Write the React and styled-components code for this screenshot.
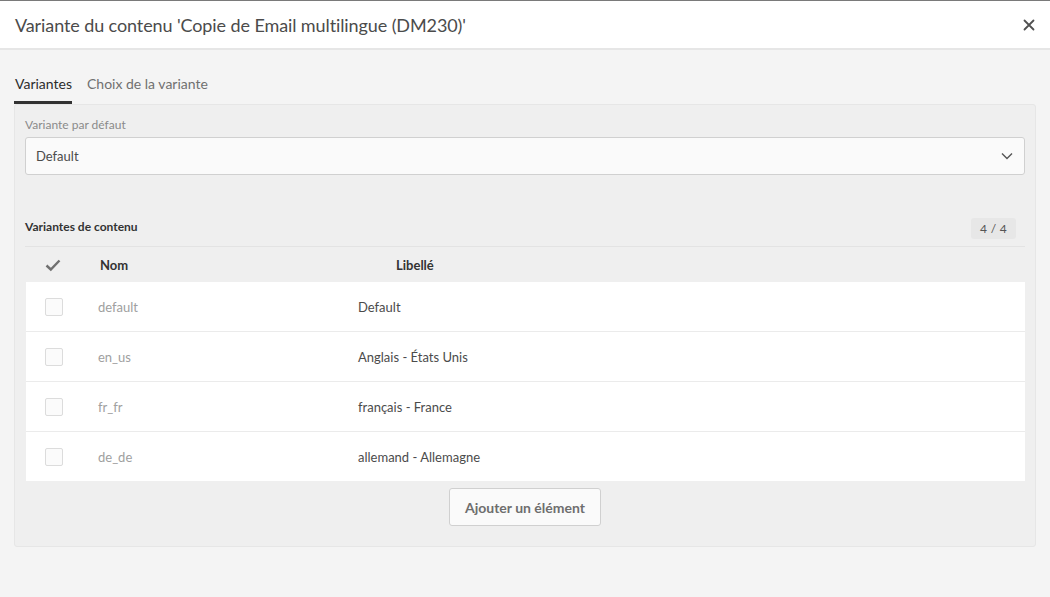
import React from 'react';
import styled, { createGlobalStyle } from 'styled-components';

const GlobalStyle = createGlobalStyle`
  html, body { margin: 0; padding: 0; }
  body {
    font-family: Lato, 'Open Sans', sans-serif;
    background: #f4f4f4;
    color: #4b4b4b;
  }
  * { box-sizing: border-box; }
`;

const Dialog = styled.div`
  width: 1050px; height: 597px;
  display: flex; flex-direction: column;
  background: #f4f4f4;
  border-top: 1px solid #7a7a7a;
`;
const Header = styled.div`
  height: 49px; flex-shrink: 0;
  background: #fff; border-bottom: 2px solid #e6e6e6;
  display: flex; align-items: center; justify-content: space-between;
  padding: 0 14px 0 15px;
`;
const Title = styled.h1`
  margin: 0; font-size: 18px; font-weight: 400; color: #4b4b4b;
  letter-spacing: -0.1px;
`;
const CloseButton = styled.button`
  border: none; background: none; padding: 0; cursor: pointer;
  width: 14px; height: 14px; display: flex;
`;
const Body = styled.div`
  padding: 22px 14px 0 14px;
  display: flex; flex-direction: column;
`;
const Tabs = styled.div`
  display: flex; gap: 15px; height: 32px; align-items: flex-start;
  padding-left: 1px;
`;
const Tab = styled.div`
  font-size: 14px; height: 32px; padding-top: 3px;
  color: ${p => (p.$active ? '#2c2c2c' : '#707070')};
  border-bottom: 3px solid ${p => (p.$active ? '#323232' : 'transparent')};
  margin-left: ${p => (p.$active ? '-1px' : '0')};
  padding-left: ${p => (p.$active ? '1px' : '0')};
`;
const Panel = styled.div`
  background: #efefef; border: 1px solid #e6e6e6; border-radius: 3px;
  width: 1022px; height: 443px;
  padding: 12px 10px 0 10px;
  display: flex; flex-direction: column;
`;
const FieldLabel = styled.div`
  font-size: 12px; color: #8a8a8a; height: 20px;
`;
const Select = styled.div`
  height: 38px; background: #fafafa; border: 1px solid #d0d0d0; border-radius: 3px;
  display: flex; align-items: center; justify-content: space-between;
  padding: 0 10px 0 10px; font-size: 13px; color: #4b4b4b;
`;
const SectionHead = styled.div`
  margin-top: 43px; height: 29px;
  display: flex; justify-content: space-between; align-items: flex-start;
  border-bottom: 1px solid #e3e3e3;
`;
const SectionTitle = styled.div`
  font-size: 12px; font-weight: 700; color: #333; padding-top: 1px;
`;
const Counter = styled.div`
  background: #e7e7e7; border-radius: 3px; font-size: 12px; color: #555;
  height: 21px; padding: 0 9px; display: flex; align-items: center;
  margin-right: 9px; letter-spacing: 0.3px;
`;
const Grid = styled.div`
  display: grid; grid-template-columns: 72px 260px 1fr;
  align-items: center;
`;
const HeadRow = styled(Grid)`
  height: 35px; font-size: 13px; font-weight: 700; color: #333;
`;
const HeadCell = styled.div`
  padding-left: ${p => p.$indent || 0}px;
`;
const CheckCell = styled.div`
  display: flex;
  padding-left: ${p => (p.$head ? '20px' : '19px')};
`;
const Rows = styled.div`
  background: #fff; margin-left: 1px;
`;
const Row = styled(Grid)`
  height: ${p => (p.$first ? '49px' : '50px')}; font-size: 13px;
  border-top: ${p => (p.$first ? 'none' : '1px solid #ebebeb')};
`;
const NameCell = styled.div`
  color: #a0a0a0;
`;
const LabelCell = styled.div`
  color: #4b4b4b;
`;
const Checkbox = styled.span`
  width: 18px; height: 18px; border: 1px solid #dcdcdc; border-radius: 2px;
  background: #fbfbfb; display: block;
`;
const Footer = styled.div`
  display: flex; justify-content: center; padding-top: 7px;
`;
const AddButton = styled.button`
  height: 38px; padding: 0 15px; background: #fafafa;
  border: 1px solid #d0d0d0; border-radius: 3px;
  font-family: inherit; font-size: 14px; font-weight: 700; color: #6e6e6e;
  cursor: pointer;
`;

const variants = [
  { name: 'default', label: 'Default' },
  { name: 'en_us', label: 'Anglais - États Unis' },
  { name: 'fr_fr', label: 'français - France' },
  { name: 'de_de', label: 'allemand - Allemagne' },
];

const App = () => (
  <>
    <GlobalStyle />
    <Dialog>
      <Header>
        <Title>Variante du contenu 'Copie de Email multilingue (DM230)'</Title>
        <CloseButton aria-label="Fermer">
          <svg width="14" height="14" viewBox="0 0 14 14">
            <path d="M2.5 2.5 L11.5 11.5 M11.5 2.5 L2.5 11.5" stroke="#505050" strokeWidth="1.8" strokeLinecap="round" />
          </svg>
        </CloseButton>
      </Header>
      <Body>
        <Tabs>
          <Tab $active>Variantes</Tab>
          <Tab>Choix de la variante</Tab>
        </Tabs>
        <Panel>
          <FieldLabel>Variante par défaut</FieldLabel>
          <Select>
            <span>Default</span>
            <svg width="14" height="14" viewBox="0 0 14 14">
              <path d="M2 4.5 L7 9.5 L12 4.5" fill="none" stroke="#555" strokeWidth="1.4" />
            </svg>
          </Select>
          <SectionHead>
            <SectionTitle>Variantes de contenu</SectionTitle>
            <Counter>4 / 4</Counter>
          </SectionHead>
          <HeadRow>
            <CheckCell $head>
              <svg width="16" height="14" viewBox="0 0 16 14">
                <path d="M1.5 7.5 L5.8 11.5 L14.5 2.5" fill="none" stroke="#707070" strokeWidth="2.4" />
              </svg>
            </CheckCell>
            <HeadCell $indent={3}>Nom</HeadCell>
            <HeadCell $indent={39}>Libellé</HeadCell>
          </HeadRow>
          <Rows>
            {variants.map((v, i) => (
              <Row key={v.name} $first={i === 0}>
                <CheckCell><Checkbox /></CheckCell>
                <NameCell>{v.name}</NameCell>
                <LabelCell>{v.label}</LabelCell>
              </Row>
            ))}
          </Rows>
          <Footer>
            <AddButton>Ajouter un élément</AddButton>
          </Footer>
        </Panel>
      </Body>
    </Dialog>
  </>
);

export default App;
